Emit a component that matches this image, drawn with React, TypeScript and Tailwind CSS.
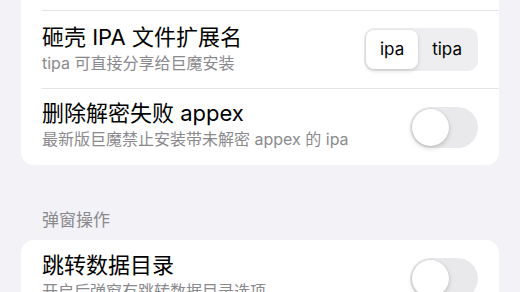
import React, { useState } from "react";

const font = { fontFamily: '"Inter", "Noto Sans CJK SC", sans-serif' };

const Toggle: React.FC<{ on?: boolean }> = ({ on = false }) => {
  const [value, setValue] = useState(on);
  return (
    <button
      type="button"
      onClick={() => setValue(!value)}
      className={`flex h-[41px] w-[68px] shrink-0 items-center rounded-full p-[2px] ${
        value ? "justify-end bg-[#34c759]" : "justify-start bg-[#e9e9eb]"
      }`}
    >
      <span className="block h-[37px] w-[37px] rounded-full bg-white shadow-[0_2px_5px_rgba(0,0,0,0.18),0_0_0_0.5px_rgba(0,0,0,0.06)]" />
    </button>
  );
};

const Segmented: React.FC<{ options: string[] }> = ({ options }) => {
  const [active, setActive] = useState(0);
  return (
    <div className="flex h-[43px] shrink-0 items-stretch rounded-[10px] bg-[#eeeef0] p-[2px]">
      {options.map((opt, i) => (
        <button
          key={opt}
          type="button"
          onClick={() => setActive(i)}
          className={`rounded-[8px] px-[14px] text-[17px] leading-none text-black ${
            i === active
              ? "bg-white shadow-[0_2px_4px_rgba(0,0,0,0.14),0_0_0_0.5px_rgba(0,0,0,0.05)]"
              : ""
          }`}
        >
          {opt}
        </button>
      ))}
    </div>
  );
};

const Row: React.FC<{
  title: string;
  subtitle: string;
  border?: boolean;
  height: string;
  lift: string;
  children: React.ReactNode;
}> = ({ title, subtitle, border, height, lift, children }) => (
  <div
    className={`ml-[21px] flex items-center pr-[21px] ${height} ${
      border ? "border-t border-[#e3e3e8]" : ""
    }`}
  >
    <div className={`flex min-w-0 flex-1 flex-col ${lift}`}>
      <div className="whitespace-nowrap text-[22px] leading-[28px] text-black">{title}</div>
      <div className="mt-[2px] whitespace-nowrap text-[16px] leading-[20px] text-[#8a8a8e]">
        {subtitle}
      </div>
    </div>
    {children}
  </div>
);

export default function App() {
  return (
    <div
      className="h-[292px] w-[520px] overflow-hidden bg-[#f2f2f7] px-[21px]"
      style={font}
    >
      <div className="rounded-b-[13px] bg-white pt-[10px]">
        <Row
          title="砸壳 IPA 文件扩展名"
          subtitle="tipa 可直接分享给巨魔安装"
          border
          height="h-[78px]"
          lift="mb-[3px]"
        >
          <Segmented options={["ipa", "tipa"]} />
        </Row>
        <Row
          title="删除解密失败 appex"
          subtitle="最新版巨魔禁止安装带未解密 appex 的 ipa"
          border
          height="h-[77px]"
          lift="mb-[6px]"
        >
          <Toggle />
        </Row>
      </div>

      <div className="pb-[9px] pl-[21px] pt-[44px] text-[17px] leading-[22px] text-[#8a8a8e]">
        弹窗操作
      </div>

      <div className="rounded-[13px] bg-white">
        <Row
          title="跳转数据目录"
          subtitle="开启后弹窗有跳转数据目录选项"
          height="h-[77px]"
          lift="mb-[6px]"
        >
          <Toggle />
        </Row>
      </div>
    </div>
  );
}
